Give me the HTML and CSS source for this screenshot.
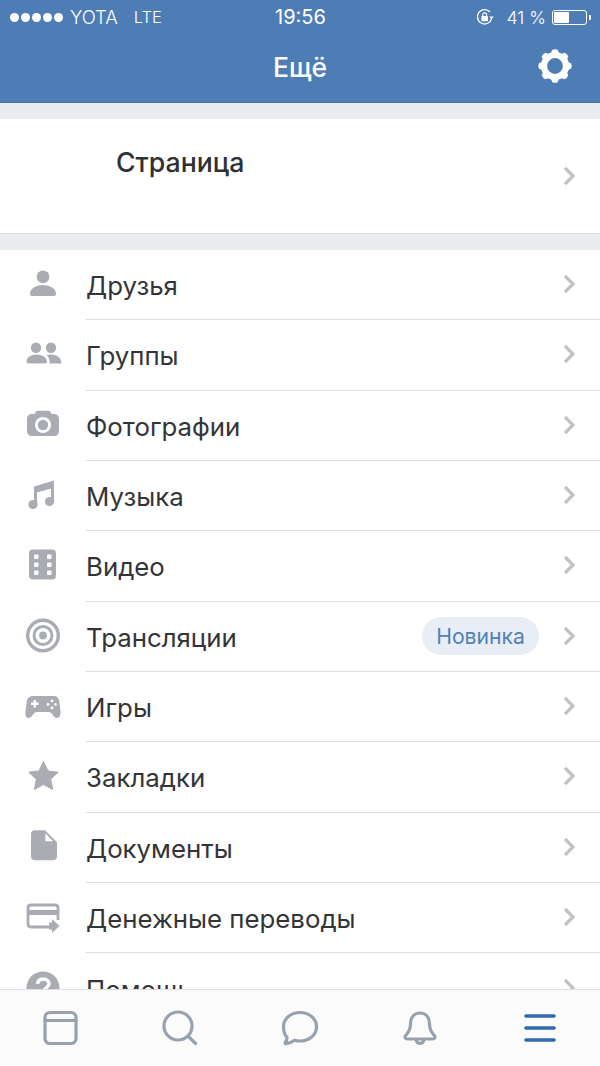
FILE: index.html
```html
<!DOCTYPE html>
<html lang="ru">
<head>
<meta charset="utf-8">
<title>Ещё</title>
<link rel="stylesheet" href="styles.css">
</head>
<body>
<div class="app">
  <header class="top">
    <div class="status">
      <div class="status-left">
        <div class="dots"><i></i><i></i><i></i><i></i><i></i></div>
        <span class="carrier">YOTA</span>
        <span class="net">LTE</span>
      </div>
      <div class="clock">19:56</div>
      <div class="status-right">
        <svg class="lock" width="20" height="20" viewBox="0 0 20 20"><path d="M16.600 11.500A7.200 7.200 0 1 1 15 5" fill="none" stroke="#fff" stroke-width="1.300"/><path d="M14.200 9.600h4.600l-2.300 2.600z" fill="#fff"/><rect x="6.400" y="9" width="6.600" height="5.200" rx=".8" fill="#fff"/><path d="M7.800 9V7.800a1.900 1.900 0 0 1 3.800 0V9" fill="none" stroke="#fff" stroke-width="1.100"/></svg>
        <span class="pct">41 %</span>
        <div class="battery"><div class="level"></div></div>
        <div class="nub"></div>
      </div>
    </div>
    <div class="nav">
      <div class="title">Ещё</div>
      <svg class="gear" width="36" height="36" viewBox="0 0 36 36"><circle cx="18" cy="18" r="11" fill="none" stroke="#fff" stroke-width="6.200"/><g fill="#fff"><path id="t" d="M13.300 6.500 15.400 1.800Q18 .8 20.600 1.800L22.700 6.500z"/><use href="#t" transform="rotate(45 18 18)"/><use href="#t" transform="rotate(90 18 18)"/><use href="#t" transform="rotate(135 18 18)"/><use href="#t" transform="rotate(180 18 18)"/><use href="#t" transform="rotate(225 18 18)"/><use href="#t" transform="rotate(270 18 18)"/><use href="#t" transform="rotate(315 18 18)"/></g></svg>
    </div>
  </header>

  <main class="scroll">
    <section class="page-card">
      <div class="page-name">Страница</div>
      <svg class="chev" width="14" height="20" viewBox="0 0 14 20"><path d="M2 2l8 8-8 8"/></svg>
    </section>

    <ul class="list">
      <li class="row">
        <svg class="ico" width="40" height="40" viewBox="0 0 40 40"><circle cx="20" cy="11.800" r="6.400"/><path d="M7 29c0-5.400 6-9 13-9s13 3.600 13 9c0 1.200-.8 2-2 2H9c-1.200 0-2-.8-2-2z"/></svg>
        <div class="cell"><span class="label">Друзья</span><svg class="chev" width="14" height="20" viewBox="0 0 14 20"><path d="M2 2l8 8-8 8"/></svg></div>
      </li>
      <li class="row">
        <svg class="ico" width="40" height="40" viewBox="0 0 40 40"><circle cx="13" cy="12.800" r="5.200"/><circle cx="28" cy="12.800" r="5.200"/><path d="M3.500 26.500c0-4 4.500-7 10-7s10.500 3 10.500 7c0 1.300-.8 2-2 2H5.500c-1.300 0-2-.7-2-2z"/><path d="M26.500 28.500c.5-3-.5-6.500-3-8.500 1.500-.4 3-.6 4.500-.6 5.500 0 10.500 3 10.500 9.100z"/></svg>
        <div class="cell"><span class="label">Группы</span><svg class="chev" width="14" height="20" viewBox="0 0 14 20"><path d="M2 2l8 8-8 8"/></svg></div>
      </li>
      <li class="row">
        <svg class="ico" width="40" height="40" viewBox="0 0 40 40"><path d="M9 8h2.500l1.500-2.500c.4-.5.8-.7 1.500-.7h11c.7 0 1.100.2 1.500.7L28.500 8H31c3 0 5 2 5 5v12c0 3-2 5-5 5H9c-3 0-5-2-5-5V13c0-3 2-5 5-5z"/><circle cx="20" cy="19" r="8" fill="#fff"/><circle cx="20" cy="19" r="5.200"/></svg>
        <div class="cell"><span class="label">Фотографии</span><svg class="chev" width="14" height="20" viewBox="0 0 14 20"><path d="M2 2l8 8-8 8"/></svg></div>
      </li>
      <li class="row">
        <svg class="ico" width="40" height="40" viewBox="0 0 40 40"><path d="M11 10.500 31 4.500v21h-3V12.500L14 16.500V29h-3z"/><circle cx="10" cy="28.500" r="4.600"/><circle cx="26.500" cy="25.500" r="4.600"/></svg>
        <div class="cell"><span class="label">Музыка</span><svg class="chev" width="14" height="20" viewBox="0 0 14 20"><path d="M2 2l8 8-8 8"/></svg></div>
      </li>
      <li class="row">
        <svg class="ico" width="40" height="40" viewBox="0 0 40 40"><rect x="6" y="3.500" width="27" height="30" rx="4"/><g fill="#fff"><rect x="11" y="8.500" width="4.500" height="4.500" rx="1"/><rect x="24" y="8.500" width="4.500" height="4.500" rx="1"/><rect x="11" y="16.500" width="4.500" height="4.500" rx="1"/><rect x="24" y="16.500" width="4.500" height="4.500" rx="1"/><rect x="11" y="24.500" width="4.500" height="4.500" rx="1"/><rect x="24" y="24.500" width="4.500" height="4.500" rx="1"/></g></svg>
        <div class="cell"><span class="label">Видео</span><svg class="chev" width="14" height="20" viewBox="0 0 14 20"><path d="M2 2l8 8-8 8"/></svg></div>
      </li>
      <li class="row">
        <svg class="ico" width="40" height="40" viewBox="0 0 40 40"><circle cx="20" cy="18.500" r="15.300" fill="none" stroke="#a9adb3" stroke-width="3.400"/><circle cx="20" cy="18.500" r="9" fill="none" stroke="#a9adb3" stroke-width="3"/><circle cx="20" cy="18.500" r="3.900"/></svg>
        <div class="cell"><span class="label">Трансляции</span><span class="badge">Новинка</span><svg class="chev" width="14" height="20" viewBox="0 0 14 20"><path d="M2 2l8 8-8 8"/></svg></div>
      </li>
      <li class="row">
        <svg class="ico" width="40" height="40" viewBox="0 0 40 40"><path fill-rule="evenodd" d="M10 9h21c3 0 4.500 2 5.200 4.500l1.300 11c.3 3.500-.8 6.500-3.500 6.500-2 0-3.200-1.500-4.500-3.500-1-1.500-2-2.500-4-2.500H14c-2 0-3 1-4 2.500C8.700 29.500 7.500 31 5.500 31 2.800 31 2 28 2.500 24.500l1.500-11C4.500 11 7 9 10 9zM10.500 13v2.500H8v2.500h2.500v2.500H13V18h2.500v-2.500H13V13zM29 12.500a1.400 1.400 0 1 0 0 2.800 1.400 1.400 0 0 0 0-2.800zM25 16a1.400 1.400 0 1 0 0 2.800 1.400 1.400 0 0 0 0-2.800zM32.500 16a1.400 1.400 0 1 0 0 2.800 1.400 1.400 0 0 0 0-2.800zM29 19.500a1.400 1.400 0 1 0 0 2.800 1.400 1.400 0 0 0 0-2.800z"/></svg>
        <div class="cell"><span class="label">Игры</span><svg class="chev" width="14" height="20" viewBox="0 0 14 20"><path d="M2 2l8 8-8 8"/></svg></div>
      </li>
      <li class="row">
        <svg class="ico" width="40" height="40" viewBox="0 0 40 40"><path d="M20.500 4.500l4.500 9.400 10.200 1.300-7.500 7 2 10.300-9.200-5-9.200 5 2-10.300-7.500-7L16 13.900z" stroke="#a9adb3" stroke-width="1" stroke-linejoin="round"/></svg>
        <div class="cell"><span class="label">Закладки</span><svg class="chev" width="14" height="20" viewBox="0 0 14 20"><path d="M2 2l8 8-8 8"/></svg></div>
      </li>
      <li class="row">
        <svg class="ico" width="40" height="40" viewBox="0 0 40 40"><path d="M11.500 2.300H22L34 14.300V28.300c0 2.500-1.500 4-4 4H12c-2.500 0-4-1.500-4-4V5.800c0-2 1.500-3.500 3.500-3.500z"/><path d="M22.300 5.300 30 13.300H22.300z" fill="#fff"/></svg>
        <div class="cell"><span class="label">Документы</span><svg class="chev" width="14" height="20" viewBox="0 0 14 20"><path d="M2 2l8 8-8 8"/></svg></div>
      </li>
      <li class="row">
        <svg class="ico" width="40" height="40" viewBox="0 0 40 40"><path d="M27 29H8c-2 0-3-1-3-3V10c0-2 1-3 3-3h24c2 0 3 1 3 3v12" fill="none" stroke="#a9adb3" stroke-width="2.800"/><rect x="5" y="12" width="30" height="5"/><path d="M26 24.500h3v-3.500l7.500 7-7.500 7v-3.500h-3z"/></svg>
        <div class="cell"><span class="label">Денежные переводы</span><svg class="chev" width="14" height="20" viewBox="0 0 14 20"><path d="M2 2l8 8-8 8"/></svg></div>
      </li>
      <li class="row">
        <svg class="ico" width="40" height="40" viewBox="0 0 40 40"><circle cx="20" cy="20" r="16.500"/><path d="M14.500 16c.5-3.500 3-5 5.700-5 3.300 0 5.800 2 5.800 4.800 0 4-5 4-5 7.200" fill="none" stroke="#fff" stroke-width="3.400"/></svg>
        <div class="cell"><span class="label">Помощь</span><svg class="chev" width="14" height="20" viewBox="0 0 14 20"><path d="M2 2l8 8-8 8"/></svg></div>
      </li>
    </ul>
  </main>

  <nav class="tabs">
    <div class="tab"><svg class="tab-ico" width="40" height="40" viewBox="0 0 40 40"><rect x="5" y="4.500" width="31" height="31" rx="5"/><path d="M5 12.500h31"/></svg></div>
    <div class="tab"><svg class="tab-ico" width="40" height="40" viewBox="0 0 40 40"><circle cx="18" cy="18" r="14"/><path d="M28.500 28.500l7 7"/></svg></div>
    <div class="tab"><svg class="tab-ico" width="40" height="40" viewBox="0 0 40 40"><path d="M20 4.500c9 0 16.500 6 16.500 14.200S29 33 20 33c-2 0-4-.3-5.500-.8-2.500 2-5 3-8.500 3.500-1 0-1.300-.7-.7-1.300 1-1.300 1.700-3 1.800-5C4.500 26.800 3.500 23 3.500 18.700 3.500 10.500 11 4.500 20 4.500z"/></svg></div>
    <div class="tab"><svg class="tab-ico" width="40" height="40" viewBox="0 0 40 40"><path d="M20 5c6 0 9.500 4.500 9.500 10.500 0 6 1.500 8.500 4.500 11.500 1.700 1.800 1 4-1.500 4h-25c-2.500 0-3.200-2.200-1.500-4 3-3 4.500-5.500 4.500-11.500C10.500 9.500 14 5 20 5z"/><path d="M16 31.500c.5 2.500 2 4 4 4s3.500-1.500 4-4"/></svg></div>
    <div class="tab"><svg class="tab-ico active" width="40" height="40" viewBox="0 0 40 40"><path d="M6 8h28M6 20h28M6 32h28"/></svg></div>
  </nav>
</div>
</body>
</html>
```
FILE: styles.css
```css
* { box-sizing: border-box; }
html, body { margin: 0; padding: 0; }
body { width: 600px; height: 1066px; overflow: hidden; font-family: Inter, Roboto, "Liberation Sans", sans-serif; background: #fff; }
.app { width: 600px; height: 1066px; display: flex; flex-direction: column; overflow: hidden; }

.top { height: 103px; flex: none; background: #4e7db6; color: #fff; box-shadow: inset 0 -1px 0 #46729f; }
.status { height: 34px; display: flex; align-items: center; justify-content: space-between; padding: 0 9px 0 10px; font-size: 17.500px; }
.status-left { display: flex; align-items: center; width: 170px; }
.dots { display: flex; gap: 2px; margin-right: 7px; }
.dots i { width: 9px; height: 9px; border-radius: 50%; background: #fff; }
.carrier { margin-right: 16px; font-size: 18.500px; font-weight: 300; }
.net { font-size: 16.500px; font-weight: 300; }
.clock { font-size: 20px; font-weight: 400; }
.status-right { display: flex; align-items: center; width: 170px; justify-content: flex-end; }
.lock { margin-right: 11px; }
.pct { margin-right: 6px; font-size: 17.800px; font-weight: 300; }
.battery { width: 35px; height: 15px; border: 1px solid #fff; border-radius: 3px; padding: 1px; }
.level { width: 15px; height: 100%; background: #fff; border-radius: 1px; }
.nub { width: 2px; height: 5px; margin-left: 2px; background: #fff; border-radius: 0 1px 1px 0; }

.nav { height: 69px; display: flex; align-items: center; justify-content: center; position: relative; }
.title { font-size: 26.500px; font-weight: 500; margin-top: -3px; }
.gear { position: absolute; left: 537px; top: 13.500px; }

.scroll { flex: 1; min-height: 0; overflow: hidden; background: #ebecf0; padding-top: 16px; }
.page-card { height: 115px; background: #fff; border-bottom: 1px solid #dcdde1; margin-bottom: 16px; display: flex; align-items: center; justify-content: space-between; padding: 0 23px 0 116px; }
.page-name { font-size: 26.700px; font-weight: 500; color: #2f3033; margin-top: -29px; }

.list { list-style: none; margin: 0; padding: 0; background: #fff; }
.row { height: 70.330px; display: flex; align-items: center; padding-left: 23px; }
.ico { flex: none; margin-right: 23px; fill: #a9adb3; }
.cell { flex: 1; height: 100%; display: flex; align-items: center; padding-right: 23px; border-bottom: 1px solid #dcdde1; }
.row:last-child .cell { border-bottom: 0; }
.label { flex: 1; font-size: 25.800px; color: #333437; padding-top: 2px; }
.badge { height: 38px; line-height: 38px; padding: 0 14px; margin-right: 24px; border-radius: 19px; background: #e8eef5; color: #5181b8; font-size: 21.200px; font-weight: 400; }
.list .chev { margin-top: -1px; }
.chev { flex: none; fill: none; stroke: #c2c2c6; stroke-width: 3.200; }

.tabs { height: 77px; flex: none; display: flex; background: #fbfbfc; border-top: 1px solid #dfdfe3; }
.tab { flex: 1; display: flex; align-items: center; justify-content: center; }
.tab-ico { fill: none; stroke: #98a2ae; stroke-width: 3.200; stroke-linecap: round; stroke-linejoin: round; }
.tab-ico.active { stroke: #2f6ab0; stroke-width: 3.600; }
```
